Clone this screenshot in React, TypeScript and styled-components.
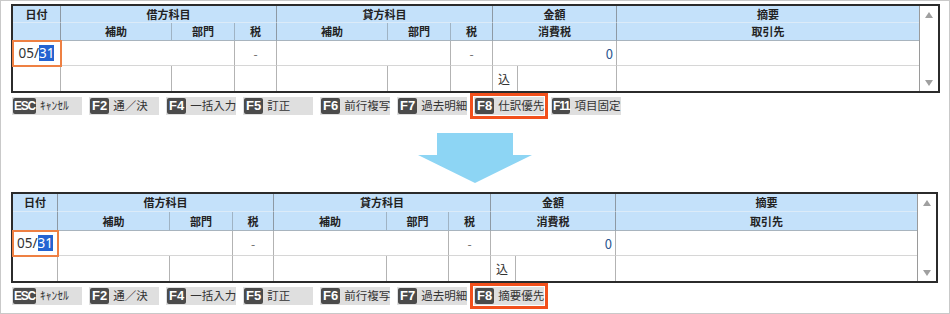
import React from "react";
import styled, { createGlobalStyle } from "styled-components";

type Key = { code: string; label: string; hot?: boolean };

const topKeys: Key[] = [
  { code: "ESC", label: "ｷｬﾝｾﾙ" },
  { code: "F2", label: "通／決" },
  { code: "F4", label: "一括入力" },
  { code: "F5", label: "訂正" },
  { code: "F6", label: "前行複写" },
  { code: "F7", label: "過去明細" },
  { code: "F8", label: "仕訳優先", hot: true },
  { code: "F11", label: "項目固定" },
];

const bottomKeys: Key[] = [
  { code: "ESC", label: "ｷｬﾝｾﾙ" },
  { code: "F2", label: "通／決" },
  { code: "F4", label: "一括入力" },
  { code: "F5", label: "訂正" },
  { code: "F6", label: "前行複写" },
  { code: "F7", label: "過去明細" },
  { code: "F8", label: "摘要優先", hot: true },
];

const TOP_COLS = "48px 111px 63px 42px 111px 63px 42px 25px 99px 302px 19px";
const BOTTOM_COLS = "45px 112px 63px 41px 113px 62px 42px 25px 100px 301px 19px";

const EntryPanel: React.FC<{ cols: string; rows: string; keys: Key[] }> = ({ cols, rows, keys }) => (
  <Panel>
    <Grid $cols={cols} $rows={rows}>
      <ScrollBar>
        <Tri $up />
        <Tri />
      </ScrollBar>

      {/* header row 1 */}
      <Head>日付</Head>
      <Head $span={3}>借方科目</Head>
      <Head $span={3}>貸方科目</Head>
      <Head $span={2}>金額</Head>
      <Head $edge>摘要</Head>

      {/* header row 2 */}
      <Head $sub />
      <Head $sub $thin>補助</Head>
      <Head $sub $thin>部門</Head>
      <Head $sub>税</Head>
      <Head $sub $thin>補助</Head>
      <Head $sub $thin>部門</Head>
      <Head $sub>税</Head>
      <Head $sub $span={2}>消費税</Head>
      <Head $sub $edge>取引先</Head>

      {/* data row 1 */}
      <DateCell>
        05/<Sel>31</Sel>
      </DateCell>
      <Cell $span={2} />
      <Cell $align="center" $muted>-</Cell>
      <Cell $span={2} />
      <Cell $align="center" $muted>-</Cell>
      <Cell $span={2} $align="right" $amount>0</Cell>
      <Cell $edge />

      {/* data row 2 */}
      <Cell $last />
      <Cell $last />
      <Cell $last />
      <Cell $last />
      <Cell $last />
      <Cell $last />
      <Cell $last />
      <Cell $last $align="left">込</Cell>
      <Cell $last />
      <Cell $last $edge />
    </Grid>

    <KeyBar>
      {keys.map((k) => (
        <KeyBox key={k.code} $hot={k.hot}>
          <KeyCap $tight={k.code.length > 2}>{k.code}</KeyCap>
          <KeyLabel>{k.label}</KeyLabel>
        </KeyBox>
      ))}
    </KeyBar>
  </Panel>
);

const App: React.FC = () => (
  <>
    <GlobalStyle />
    <Frame>
      <EntryPanel cols={TOP_COLS} rows="17px 18px 25px 25px" keys={topKeys} />
      <ArrowWrap>
        <svg width="114" height="50" viewBox="0 0 114 50">
          <polygon points="19,0 95,0 95,22 114,22 57,50 0,22 19,22" fill="#8dd5f4" />
        </svg>
      </ArrowWrap>
      <EntryPanel cols={BOTTOM_COLS} rows="18px 19px 25px 25px" keys={bottomKeys} />
    </Frame>
  </>
);

export default App;

// ------------------ Styled Components ------------------

const GlobalStyle = createGlobalStyle`
  html, body {
    margin: 0;
    padding: 0;
    background: #ffffff;
  }
  body {
    font-family: "Noto Sans CJK JP", "Noto Sans", sans-serif;
    color: #333;
  }
`;

const Frame = styled.div`
  box-sizing: border-box;
  width: 950px;
  height: 314px;
  border: 1px solid #c9c9c9;
  padding: 3px 0 0 10px;
  display: flex;
  flex-direction: column;
`;

const Panel = styled.div`
  display: flex;
  flex-direction: column;
  gap: 4px;
`;

const Grid = styled.div<{ $cols: string; $rows: string }>`
  display: grid;
  width: max-content;
  grid-template-columns: ${({ $cols }) => $cols};
  grid-template-rows: ${({ $rows }) => $rows};
  border: 2px solid #2b2b2b;
  background: #fff;
`;

const Head = styled.div<{ $span?: number; $sub?: boolean; $thin?: boolean; $edge?: boolean }>`
  box-sizing: border-box;
  grid-column: span ${({ $span }) => $span ?? 1};
  background: #c4e1fa;
  border-right: ${({ $edge }) => ($edge ? "none" : "1px solid")};
  border-right-color: ${({ $thin }) => ($thin ? "#9fb3c4" : "#8d99a4")};
  border-bottom: 1px solid ${({ $sub }) => ($sub ? "#a8b4be" : "#dcebf8")};
  display: flex;
  align-items: center;
  justify-content: center;
  font-size: 11px;
  font-weight: 700;
  color: #222;
  line-height: 1;
`;

const Cell = styled.div<{
  $span?: number;
  $align?: "left" | "center" | "right";
  $last?: boolean;
  $edge?: boolean;
  $muted?: boolean;
  $amount?: boolean;
}>`
  box-sizing: border-box;
  grid-column: span ${({ $span }) => $span ?? 1};
  border-right: ${({ $edge }) => ($edge ? "none" : "1px solid #b3b3b3")};
  border-bottom: ${({ $last }) => ($last ? "none" : "1px solid #d6d6d6")};
  display: flex;
  align-items: center;
  justify-content: ${({ $align }) =>
    $align === "right" ? "flex-end" : $align === "left" ? "flex-start" : "center"};
  padding: ${({ $align }) => ($align === "right" ? "0 3px 0 0" : $align === "left" ? "0 0 0 5px" : "0")};
  font-size: ${({ $amount }) => ($amount ? "13px" : "12px")};
  color: ${({ $muted, $amount }) => ($muted ? "#666" : $amount ? "#2a5590" : "#333")};
`;

const DateCell = styled.div`
  box-sizing: border-box;
  border-right: 1px solid #b3b3b3;
  border-bottom: 1px solid #d6d6d6;
  outline: 2px solid #ee8043;
  outline-offset: -1px;
  display: flex;
  align-items: center;
  justify-content: center;
  font-family: "Noto Sans", "Noto Sans CJK JP", sans-serif;
  font-size: 13.5px;
  color: #333;
  position: relative;
  z-index: 1;
`;

const Sel = styled.span`
  background: #2463d1;
  color: #fff;
  line-height: 16px;
`;

const ScrollBar = styled.div`
  grid-column: 11;
  grid-row: 1 / span 4;
  border-left: 1px solid #9a9a9a;
  background: #fff;
  display: flex;
  flex-direction: column;
  align-items: center;
  justify-content: space-between;
  padding: 6px 0 5px;
`;

const Tri = styled.div<{ $up?: boolean }>`
  width: 0;
  height: 0;
  border-left: 4px solid transparent;
  border-right: 4px solid transparent;
  ${({ $up }) => ($up ? "border-bottom: 6px solid #a0a0a0;" : "border-top: 6px solid #a0a0a0;")}
`;

const KeyBar = styled.div`
  display: flex;
  gap: 7px;
  height: 18px;
  padding-left: 1px;
`;

const KeyBox = styled.div<{ $hot?: boolean }>`
  box-sizing: border-box;
  width: 70px;
  height: 18px;
  background: #dfdfdf;
  display: flex;
  align-items: center;
  gap: 4px;
  padding-left: 1px;
  outline: ${({ $hot }) => ($hot ? "3px solid #f2501c" : "none")};
  outline-offset: 1px;
`;

const KeyCap = styled.span<{ $tight?: boolean }>`
  flex-shrink: 0;
  background: #4b4b4b;
  color: #fff;
  height: 16px;
  min-width: 16px;
  padding: 0 ${({ $tight }) => ($tight ? "1px" : "2px")};
  box-sizing: border-box;
  border-radius: 2px;
  font-family: "Liberation Sans", Arial, sans-serif;
  font-weight: 700;
  font-size: ${({ $tight }) => ($tight ? "12px" : "13px")};
  letter-spacing: ${({ $tight }) => ($tight ? "-1.2px" : "0")};
  line-height: 16px;
  text-align: center;
`;

const KeyLabel = styled.span`
  font-size: 11.5px;
  color: #333;
  white-space: nowrap;
  line-height: 1;
`;

const ArrowWrap = styled.div`
  display: flex;
  justify-content: center;
  margin: 18px 0 9px;
  padding-right: 10px;
  height: 50px;
`;
